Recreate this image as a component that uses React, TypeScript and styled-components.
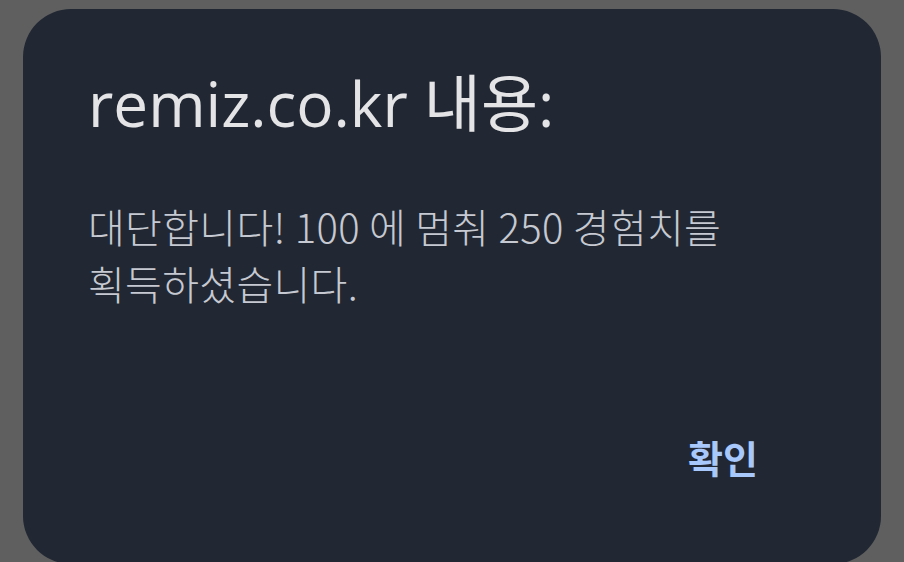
import React from "react";
import styled, { createGlobalStyle } from "styled-components";

const Global = createGlobalStyle`
  html, body { margin: 0; padding: 0; background: #5f5f5f; overflow: hidden; }
  body { width: 904px; height: 562px; }
`;

const Screen = styled.div`
  width: 904px;
  height: 562px;
  padding: 9px 23px 0 23px;
  box-sizing: border-box;
  display: flex;
  flex-direction: column;
`;

const Dialog = styled.div`
  flex: 1;
  background: #212833;
  border-radius: 48px;
  padding: 58px 65px 0 65px;
  display: flex;
  flex-direction: column;
  margin-bottom: -2px;
`;

const Title = styled.h1`
  margin: 0;
  font-family: "Open Sans", "Noto Sans CJK KR", sans-serif;
  font-weight: 400;
  font-size: 62px;
  line-height: 72px;
  color: #e4e4e6;
`;

const Message = styled.p`
  margin: 59px 0 0 0;
  font-family: "Noto Sans CJK KR", sans-serif;
  font-weight: 300;
  font-size: 40px;
  line-height: 57px;
  letter-spacing: 0.3px;
  color: #c6c9d1;
`;

const Actions = styled.div`
  display: flex;
  justify-content: flex-end;
  margin-top: 123px;
  padding-right: 58px;
`;

const Button = styled.button`
  background: none;
  border: none;
  padding: 0;
  font-family: "Noto Sans CJK KR", sans-serif;
  font-weight: 700;
  font-size: 38px;
  line-height: 44px;
  color: #a8c7fa;
`;

export default function App() {
  return (
    <>
      <Global />
      <Screen>
        <Dialog>
          <Title>remiz.co.kr 내용:</Title>
          <Message>
            대단합니다! 100 에 멈춰 250 경험치를
            <br />
            획득하셨습니다.
          </Message>
          <Actions>
            <Button>확인</Button>
          </Actions>
        </Dialog>
      </Screen>
    </>
  );
}
